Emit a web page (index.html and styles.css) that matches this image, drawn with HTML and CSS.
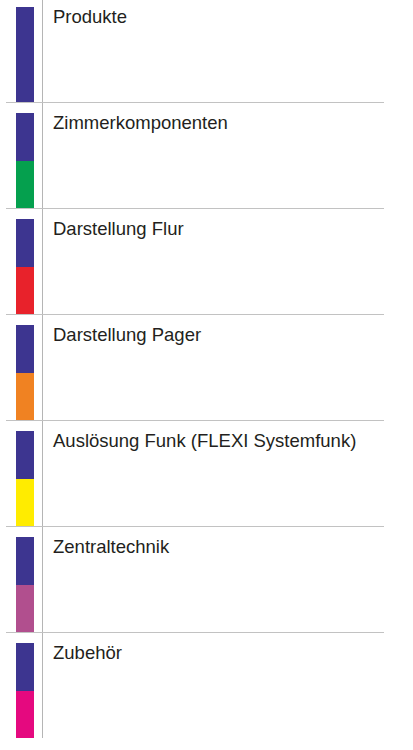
FILE: index.html
```html
<!DOCTYPE html>
<html lang="de">
<head>
<meta charset="utf-8">
<title>Produkte</title>
<link rel="stylesheet" href="styles.css">
</head>
<body>
<ul class="list">
  <li class="row">
    <div class="swatch"><span class="blue"></span><span class="blue"></span></div>
    <div class="label">Produkte</div>
  </li>
  <li class="row">
    <div class="swatch"><span class="blue"></span><span class="green"></span></div>
    <div class="label">Zimmerkomponenten</div>
  </li>
  <li class="row">
    <div class="swatch"><span class="blue"></span><span class="red"></span></div>
    <div class="label">Darstellung Flur</div>
  </li>
  <li class="row">
    <div class="swatch"><span class="blue"></span><span class="orange"></span></div>
    <div class="label">Darstellung Pager</div>
  </li>
  <li class="row">
    <div class="swatch"><span class="blue"></span><span class="yellow"></span></div>
    <div class="label">Auslösung Funk (FLEXI Systemfunk)</div>
  </li>
  <li class="row">
    <div class="swatch"><span class="blue"></span><span class="mauve"></span></div>
    <div class="label">Zentraltechnik</div>
  </li>
  <li class="row">
    <div class="swatch"><span class="blue"></span><span class="pink"></span></div>
    <div class="label">Zubehör</div>
  </li>
</ul>
</body>
</html>
```
FILE: styles.css
```css
html, body {
  margin: 0;
  padding: 0;
  background: #ffffff;
}

body {
  font-family: "Liberation Sans", Arial, sans-serif;
  color: #231f20;
}

.list {
  list-style: none;
  margin: -3px 0 0 6px;
  padding: 0;
  width: 378px;
}

.row {
  display: flex;
  height: 105px;
  border-bottom: 1px solid #c2c2c2;
}

.row:last-child {
  border-bottom: none;
}

.swatch {
  width: 18px;
  margin: 10px 8px 0 10px;
  display: grid;
  grid-template-rows: 1fr 1fr;
}

.blue { background: #3d3590; }
.green { background: #05a04e; }
.red { background: #e8222b; }
.orange { background: #f08222; }
.yellow { background: #ffec00; }
.mauve { background: #b14f8e; }
.pink { background: #e5097f; }

.label {
  flex: 1;
  border-left: 1px solid #b5b5b5;
  padding: 9px 0 0 10px;
  font-size: 18.5px;
  line-height: 1.15;
}
```
